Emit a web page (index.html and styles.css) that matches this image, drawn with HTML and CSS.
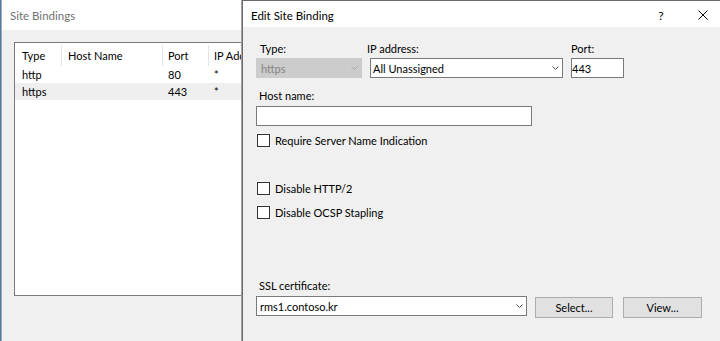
FILE: index.html
```html
<!DOCTYPE html>
<html lang="en">
<head>
<meta charset="utf-8">
<title>Edit Site Binding</title>
<link rel="stylesheet" href="styles.css">
</head>
<body>
<section class="win win-back">
  <header class="titlebar">Site Bindings</header>
  <div class="win-body">
    <div class="listview">
      <div class="lv-row lv-head">
        <span class="c1">Type</span><span class="c2">Host Name</span><span class="c3">Port</span><span class="c4">IP Address</span>
      </div>
      <div class="lv-row">
        <span class="c1">http</span><span class="c2"></span><span class="c3">80</span><span class="c4">*</span>
      </div>
      <div class="lv-row lv-sel">
        <span class="c1">https</span><span class="c2"></span><span class="c3">443</span><span class="c4">*</span>
      </div>
    </div>
  </div>
</section>

<section class="win dialog">
  <header class="titlebar">
    <span class="title">Edit Site Binding</span>
    <span class="tb-help">?</span>
    <span class="tb-close"><svg width="10" height="10" viewBox="0 0 10 10"><path d="M0.5 0.5L9.5 9.5M9.5 0.5L0.5 9.5" stroke="#000" stroke-width="1" fill="none"/></svg></span>
  </header>
  <div class="dlg-body">
    <div class="field-row">
      <div class="field f-type">
        <span class="label">Type:</span>
        <div class="ctl combo disabled"><span class="val">https</span><svg class="chev" width="7" height="4" viewBox="0 0 7 4"><path d="M0.5 0.5L3.5 3.5L6.5 0.5" stroke="#a6a6a6" fill="none"/></svg></div>
      </div>
      <div class="field f-ip">
        <span class="label">IP address:</span>
        <div class="ctl combo"><span class="val">All Unassigned</span><svg class="chev" width="7" height="4" viewBox="0 0 7 4"><path d="M0.5 0.5L3.5 3.5L6.5 0.5" stroke="#505050" fill="none"/></svg></div>
      </div>
      <div class="field f-port">
        <span class="label">Port:</span>
        <div class="ctl text"><span class="val">443</span></div>
      </div>
    </div>

    <span class="label host-label">Host name:</span>
    <div class="ctl text host-input"></div>

    <label class="check c-sni"><span class="box"></span>Require Server Name Indication</label>
    <label class="check c-http2"><span class="box"></span>Disable HTTP/2</label>
    <label class="check c-ocsp"><span class="box"></span>Disable OCSP Stapling</label>

    <span class="label ssl-label">SSL certificate:</span>
    <div class="ssl-row">
      <div class="ctl combo ssl-combo"><span class="val">rms1.contoso.kr</span><svg class="chev" width="7" height="4" viewBox="0 0 7 4"><path d="M0.5 0.5L3.5 3.5L6.5 0.5" stroke="#505050" fill="none"/></svg></div>
      <button class="btn btn-select" type="button">Select...</button>
      <button class="btn btn-view" type="button">View...</button>
    </div>
  </div>
</section>
</body>
</html>
```

FILE: styles.css
```css
* { box-sizing: border-box; }
html, body { margin: 0; padding: 0; }
body {
  width: 720px;
  height: 341px;
  overflow: hidden;
  position: relative;
  background: #4a7bb0;
  font-family: Lato, "Segoe UI", "Liberation Sans", sans-serif;
  font-size: 11px;
  color: #000;
}

.win {
  position: absolute;
  top: 0;
  bottom: 0;
  display: flex;
  flex-direction: column;
  background: #f0f0f0;
}
.titlebar {
  flex: none;
  display: flex;
  align-items: center;
  background: #fff;
}

/* back window */
.win-back {
  left: 1px;
  width: 262px;
  border-left: 1px solid #a9a9a9;
}
.win-back .titlebar {
  height: 30px;
  padding: 1px 0 0 8px;
  color: #717171;
  font-size: 11.5px;
}
.win-body {
  flex: 1;
  padding: 12px 0 0 12px;
}
.listview {
  width: 260px;
  height: 254px;
  border: 1px solid #7a7a7a;
  background: #fff;
}
.lv-row {
  display: grid;
  grid-template-columns: 47px 101px 46px 1fr;
  height: 17px;
  align-items: center;
  white-space: nowrap;
}
.lv-row span { overflow: hidden; }
.lv-head { height: 23px; }
.lv-head span {
  height: 21px;
  display: flex;
  align-items: center;
  border-right: 1px solid #e5e5e5;
  margin-top: 1px;
}
.lv-sel { background: #efefef; }
.c1 { padding-left: 7px; }
.c2 { padding-left: 6px; }
.c3 { padding-left: 5px; }
.c4 { padding-left: 5px; }

/* dialog */
.dialog {
  left: 242px;
  right: 0;
  border-left: 1px solid #6a6a6a;
  border-top: 1px solid #6a6a6a;
  box-shadow: -1px 0 0 #a3a3a3;
}
.dialog .titlebar {
  height: 26px;
  padding: 2px 0 0 8px;
  font-size: 11.5px;
}
.title { flex: 1; }
.tb-help {
  width: 20px;
  text-align: center;
  margin-right: 15px;
  font-size: 12px;
}
.tb-close {
  width: 34px;
  display: flex;
  justify-content: center;
  align-items: center;
}
.tb-close svg { display: block; }

.dlg-body {
  flex: 1;
  display: flex;
  flex-direction: column;
  align-items: flex-start;
  padding: 14px 0 0 13px;
}
.label {
  display: block;
  height: 16px;
  line-height: 16px;
  white-space: nowrap;
}
.field-row {
  display: flex;
  gap: 8px;
}
.field {
  display: flex;
  flex-direction: column;
  gap: 1px;
}
.f-type { width: 106px; }
.f-type .label { padding-left: 4px; }
.f-ip { width: 193px; }
.f-ip .label { margin-left: -3px; }
.f-port { width: 53px; }

.ctl {
  height: 20px;
  display: flex;
  align-items: center;
  border: 1px solid #7a7a7a;
  background: #fff;
  white-space: nowrap;
}
.combo { padding-left: 2px; }
.combo .val { flex: 1; }
.chev { display: block; margin-right: 3px; flex: none; }
.disabled {
  background: #cccccc;
  border-color: #cccccc;
  color: #838383;
  padding-left: 4px;
}
.text { padding-left: 0; }

.host-label { margin-top: 10px; padding-left: 3px; }
.host-input { width: 276px; margin-top: 2px; }

.check {
  display: flex;
  align-items: center;
  gap: 5px;
  height: 17px;
  white-space: nowrap;
}
.box {
  width: 13px;
  height: 13px;
  margin-left: 1px;
  border: 1px solid #333;
  background: #fff;
  flex: none;
}
.c-sni { margin-top: 6px; }
.c-http2 { margin-top: 31px; }
.c-ocsp { margin-top: 7px; }

.ssl-label { margin-top: 57px; padding-left: 3px; }
.ssl-row {
  display: flex;
  align-items: flex-start;
  margin-top: 2px;
}
.ssl-combo { width: 271px; padding-left: 3px; }
.btn {
  height: 21px;
  margin-top: 1px;
  padding: 0;
  border: 1px solid #adadad;
  background: #e1e1e1;
  font: inherit;
  color: #000;
}
.btn-select { width: 78px; margin-left: 8px; }
.btn-view { width: 79px; margin-left: 10px; }
```
